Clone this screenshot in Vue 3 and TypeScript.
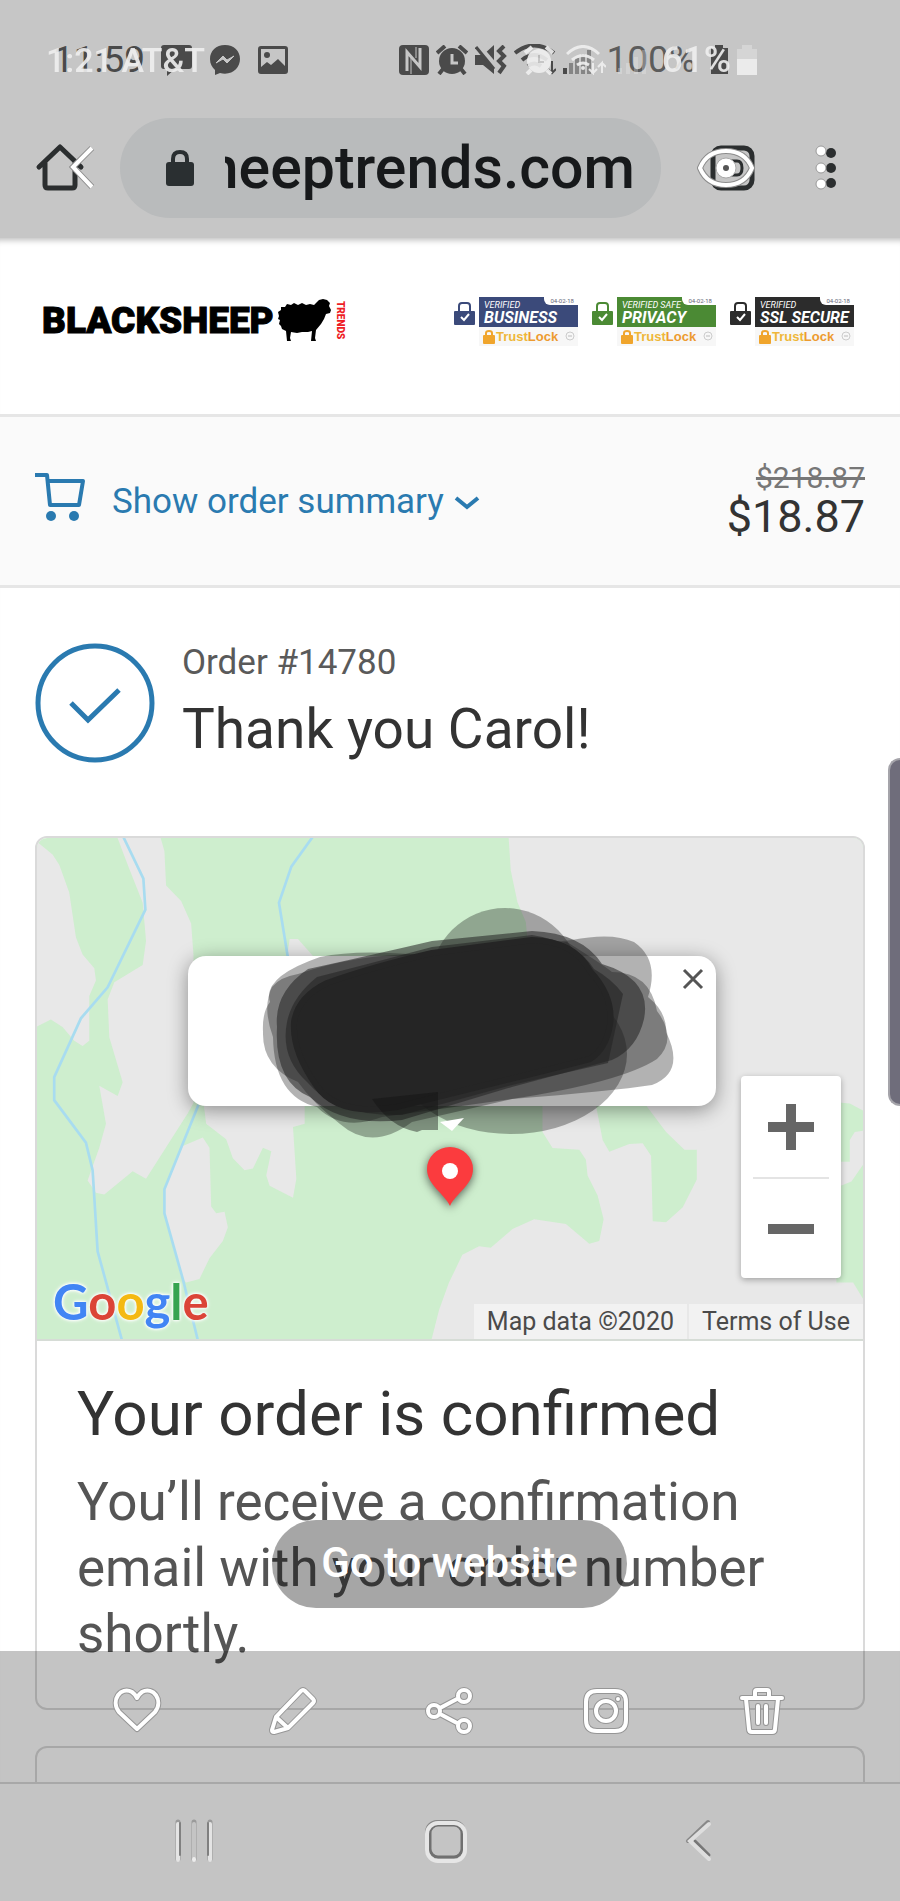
<script setup lang="ts">
interface Badge {
  kind: string
  top: string
  name: string
}

const badges: Badge[] = [
  { kind: 'business', top: 'VERIFIED', name: 'BUSINESS' },
  { kind: 'privacy', top: 'VERIFIED SAFE', name: 'PRIVACY' },
  { kind: 'ssl', top: 'VERIFIED', name: 'SSL SECURE' },
]

interface Action {
  label: string
  path: string
}

const actions: Action[] = [
  {
    label: 'Favorite',
    path: 'M25 43 L7 26 C-2 14 9 0 20 6 Q23 8 25 12 Q27 8 30 6 C41 0 52 14 43 26 Z',
  },
  {
    label: 'Edit',
    path: 'M33 5 Q35 3 37 5 L45 13 Q47 15 45 17 L20 42 L6 46 Q4 46 4 44 L8 31 Z M8 31 L20 42',
  },
  {
    label: 'Share',
    path: 'M15 22 L32 13 M15 28 L32 37 M15 25 A6 6 0 1 1 3 25 A6 6 0 1 1 15 25 M45 10 A6 6 0 1 1 33 10 A6 6 0 1 1 45 10 M45 40 A6 6 0 1 1 33 40 A6 6 0 1 1 45 40',
  },
  {
    label: 'Instagram',
    path: 'M16 5 H34 Q45 5 45 16 V34 Q45 45 34 45 H16 Q5 45 5 34 V16 Q5 5 16 5 Z M35 25 A10 10 0 1 1 15 25 A10 10 0 1 1 35 25 M37 12.9 V13.1',
  },
  {
    label: 'Delete',
    path: 'M5 12 H45 M18 11 V6 Q18 4 20 4 H30 Q32 4 32 6 V11 M9 13 L12 43 Q12 46 15 46 H35 Q38 46 38 43 L41 13 M21 20 V37 M29 20 V37',
  },
]
</script>

<template>
  <div class="screen">
    <header class="status">
      <div class="layer dark">
        <span class="clock">11:59</span>
        <svg width="31" height="32" viewBox="0 0 31 32"><path d="M3 1H28Q31 1 31 4V22Q31 25 28 25H14L6 32V25H3Q0 25 0 22V4Q0 1 3 1Z" /></svg>
        <svg width="30" height="30" viewBox="0 0 30 30">
          <path d="M15 0C6 0 0 6 0 14C0 19 2 22 5 25V30L10 28C22 31 30 23 30 14C30 6 24 0 15 0Z" />
          <path d="M6 18L13 11L17 15L24 11L17 18L13 14Z" fill="#c6c6c6" stroke="#c6c6c6" />
        </svg>
        <svg width="30" height="30" viewBox="0 0 30 30">
          <path fill-rule="evenodd" d="M3 1H27Q30 1 30 4V26Q30 29 27 29H3Q0 29 0 26V4Q0 1 3 1ZM3 4V22L9 17L13 20L20 14L27 21V4Z" />
          <circle cx="9" cy="10" r="3" />
        </svg>
        <div class="signals">
          <svg width="30" height="30" viewBox="0 0 30 30">
            <rect width="30" height="30" rx="4" />
            <path d="M8 26V7L21 22V3" fill="none" stroke="#c6c6c6" stroke-width="3" />
            <path d="M12 29V13M17 2V13" stroke="#c6c6c6" stroke-width="1" />
          </svg>
          <svg width="32" height="30" viewBox="0 0 32 30">
            <circle cx="16" cy="16" r="13" />
            <path d="M1 8L9 1M31 8L23 1M7 24L3 29M25 24L29 29" stroke="#4a4a4a" stroke-width="4" />
            <path d="M16 9V18H22" fill="none" stroke="#c6c6c6" stroke-width="3" />
          </svg>
          <svg width="32" height="30" viewBox="0 0 32 30">
            <path d="M0 10H8L19 0V29L8 20H0Z" />
            <path d="M3 1L20 21" stroke="#c6c6c6" stroke-width="6" />
            <path d="M1 2L19 24" stroke="#4a4a4a" stroke-width="3" />
            <path d="M29 1L24 6L29 11L24 16L29 21L24 28" fill="none" stroke="#4a4a4a" stroke-width="4" />
          </svg>
          <svg width="42" height="32" viewBox="0 0 42 32">
            <path d="M1 9Q20 -6 40 9M8 16Q20 6 33 16M14 22Q20 17 27 22" fill="none" stroke="#4a4a4a" stroke-width="4" />
            <path d="M38 17V28M34 25L38 29L42 25" fill="none" stroke="#4a4a4a" stroke-width="2" />
          </svg>
          <svg width="37" height="30" viewBox="0 0 37 30">
            <path d="M2 29V23" stroke="#4a4a4a" stroke-width="4" />
            <path d="M8 29V18M14 29V13M20 29V9M26 29V5" stroke="#858585" stroke-width="4" />
          </svg>
        </div>
        <span class="percent">100%</span>
        <svg width="17" height="30" viewBox="0 0 17 30"><path d="M0 3H4V0H12V3H17V29H0Z" /></svg>
      </div>
      <div class="layer light">
        <span class="clock">1:21 AT&amp;T</span>
        <span class="spring"></span>
        <svg width="30" height="30" viewBox="0 0 30 30">
          <circle cx="15" cy="16" r="12" />
          <path d="M1 8L8 2M29 8L22 2M7 25L3 29M23 25L27 29" stroke="#f0f0f0" stroke-width="4" />
          <path d="M15 10V17H20" fill="none" stroke="#c6c6c6" stroke-width="2" />
        </svg>
        <svg width="40" height="30" viewBox="0 0 40 30">
          <path d="M1 9Q17 -6 33 9M6 15Q17 6 28 15M11 20Q17 16 23 20" fill="none" stroke="#f0f0f0" stroke-width="3" />
          <circle cx="17" cy="23" r="2" />
          <path d="M27 18V28L23 24M27 28L31 24M36 28V18L32 22M36 18L40 22" fill="none" stroke="#f0f0f0" stroke-width="2" />
        </svg>
        <svg class="faint" width="34" height="30" viewBox="0 0 34 30"><path d="M2 29V23M10 29V18M18 29V12M26 29V5" stroke="#f0f0f0" stroke-width="4" /></svg>
        <span class="percent">61%</span>
        <svg width="20" height="30" viewBox="0 0 20 30">
          <path d="M0 4H5V0H15V4H20V14H0Z" opacity=".4" />
          <path d="M0 14H20V30H0Z" />
        </svg>
      </div>
    </header>

    <nav class="toolbar" aria-label="Browser">
      <button type="button" aria-label="Home">
        <svg width="60" height="50" viewBox="0 0 60 50">
          <path d="M4 24L25 4L46 24M10 20V42Q10 45 13 45H37Q40 45 40 42V20" fill="none" stroke="#2b2e2f" stroke-width="5" stroke-linecap="round" stroke-linejoin="round" />
          <path d="M57 5L38 24L57 44" fill="none" stroke="#8c8c8c" stroke-width="6" />
          <path d="M57 5L38 24L57 44" fill="none" stroke="#fff" stroke-width="4" />
        </svg>
      </button>
      <div class="address">
        <svg width="28" height="36" viewBox="0 0 28 36">
          <rect y="12" width="28" height="24" rx="3" fill="#2a2f31" />
          <path d="M7 14V9Q7 2 14 2Q21 2 21 9V14" fill="none" stroke="#2a2f31" stroke-width="4" />
        </svg>
        <span class="url"><span>heeptrends.com</span></span>
      </div>
      <button type="button" aria-label="Tabs">
        <svg width="60" height="50" viewBox="0 0 60 50">
          <rect x="16" y="5" width="39" height="40" rx="8" fill="none" stroke="#2b2e2f" stroke-width="5" />
          <path d="M32 18H40Q45 18 45 25Q45 32 40 32H32" fill="none" stroke="#2b2e2f" stroke-width="3" />
          <path d="M3 25Q10 8 29 8Q48 8 55 25Q48 42 29 42Q10 42 3 25Z" fill="none" stroke="#8c8c8c" stroke-width="6" />
          <path d="M3 25Q10 8 29 8Q48 8 55 25Q48 42 29 42Q10 42 3 25Z" fill="none" stroke="#fff" stroke-width="4" />
          <circle cx="29" cy="25" r="10" fill="#fff" stroke="#aaa" />
          <circle cx="29" cy="25" r="3" fill="#555" />
        </svg>
      </button>
      <button class="more" type="button" aria-label="More options">
        <svg width="24" height="50" viewBox="0 0 24 50">
          <g fill="#2b2e2f"><circle cx="16" cy="10" r="5" /><circle cx="16" cy="25" r="5" /><circle cx="16" cy="40" r="5" /></g>
          <g fill="#fff" stroke="#999"><circle cx="6" cy="8" r="5" /><circle cx="6" cy="25" r="5" /><circle cx="6" cy="41" r="5" /></g>
        </svg>
      </button>
    </nav>

    <main class="page">
      <div class="brand">
        <a class="logo" href="#" aria-label="Blacksheep Trends">
          <span class="word">BLACKSHEEP</span>
          <svg width="54" height="42" viewBox="0 0 54 42">
            <path d="M1 17L0 13L3 11L3 8L7 8L9 5L13 6L16 4L20 6L24 4L28 6L32 5L36 6L39 3L41 1L45 0L49 1L52 4L51 7L53 11L52 14L48 15L46 20L43 25L38 31L37 39L38 42H33L34 32L30 33L24 33L19 34L13 33L12 39L13 42H9L8 32L4 30L3 27L1 25L2 21L0 20Z" />
          </svg>
          <span class="trends">TRENDS</span>
        </a>
        <div class="badges">
          <div v-for="b in badges" :key="b.name" class="badge" :class="b.kind">
            <svg class="shield" width="21" height="23" viewBox="0 0 21 23">
              <rect y="9" width="21" height="14" rx="1" fill="currentColor" />
              <path d="M5 10V4Q5 1 8 1H13Q16 1 16 4V10" fill="none" stroke="currentColor" stroke-width="2" />
              <path d="M7 15L10 18L15 12" fill="none" stroke="#fff" stroke-width="2" />
            </svg>
            <div class="seal">
              <div class="plate">
                <span class="date">04-02-18</span>
                <span class="over">{{ b.top }}</span>
                <strong>{{ b.name }}</strong>
              </div>
              <div class="trust">
                <svg width="12" height="14" viewBox="0 0 12 14">
                  <rect y="5" width="12" height="9" rx="1" fill="#f0a52c" />
                  <path d="M3 6V3Q3 1 6 1Q9 1 9 3V6" fill="none" stroke="#f0a52c" stroke-width="2" />
                </svg>
                <span class="trust-name">Trust<b>Lock</b></span>
                <svg class="mark" width="11" height="11" viewBox="0 0 11 11"><circle cx="5" cy="5" r="4" fill="none" stroke="#ccc" /><path d="M3 5H7" stroke="#bbb" /></svg>
              </div>
            </div>
          </div>
        </div>
      </div>

      <section class="summary">
        <button type="button" class="toggle">
          <svg width="52" height="50" viewBox="0 0 52 50">
            <path d="M0 3H12L15 33H44L48 9H13" fill="none" stroke="#2a7ab0" stroke-width="4" stroke-linejoin="round" />
            <circle cx="16" cy="44" r="5" fill="#2a7ab0" /><circle cx="39" cy="44" r="5" fill="#2a7ab0" />
          </svg>
          <span>Show order summary</span>
          <svg class="caret" width="26" height="16" viewBox="0 0 26 16"><path d="M2 3L13 12L24 3" fill="none" stroke="#2a7ab0" stroke-width="4" /></svg>
        </button>
        <div class="prices">
          <del>$218.87</del>
          <span>$18.87</span>
        </div>
      </section>

      <section class="thanks">
        <svg width="120" height="120" viewBox="0 0 120 120" fill="none" stroke="#2a7ab0">
          <circle cx="60" cy="60" r="57" stroke-width="5" />
          <path d="M36 60L53 77L84 47" stroke-width="5" />
        </svg>
        <div>
          <p>Order #14780</p>
          <h1>Thank you Carol!</h1>
        </div>
      </section>

      <article class="card">
        <div class="map">
          <svg class="terrain" viewBox="0 0 826 500" preserveAspectRatio="xMidYMid slice">
            <rect width="826" height="500" fill="#ceeece" />
            <g transform="translate(-37 -18) scale(.3333 .3444)" fill="#e8e8e8">
              <path d="M110 60L160 100L180 130L210 210L230 340L250 390L285 430L290 465L270 510V640L250 655L225 640L190 600L155 578L110 600Z" />
              <path d="M350 40H480L495 90L500 190L545 235L575 300L582 390V820L565 850L440 1040L400 1018L315 1085L290 1080L265 1045L300 950L320 880L300 770L355 800L370 760L330 630L325 520L345 470L430 420L440 350L430 240L385 130Z" />
              <path d="M610 800H915V880L880 890L890 1040L880 1095L810 1060L800 1030L815 960L790 950L760 1010L735 1015L700 980L680 925L620 880Z" />
              <path d="M610 920L630 950L635 1120L650 1140L675 1135L685 1180L670 1220L630 1270L600 1330L560 1340L545 1325L495 1140V1070L550 945Z" />
              <path d="M862 400L870 345H895L945 400Z" />
              <path d="M370 45L432 170L438 260L325 485L245 575L165 745V812L260 935L280 1015L295 1250L370 1515M942 45L875 135L838 240L865 400M597 825L495 1070V1140L550 1330L597 1515" fill="none" stroke="#a8dcf0" stroke-width="8" />
            </g>
            <g transform="translate(412 -98) scale(.3333 .3954)">
              <path fill="#e8e8e8" d="M178 240H1250V1520H-54L-30 1440L0 1370L40 1300L90 1278L125 1282L190 1235L255 1210L350 1222L420 1272L450 1265L463 1210L445 1150L415 1100L410 1060L390 1035L310 1030L280 990V920L230 460L205 410L185 330Z" />
              <path fill="#ceeece" d="M435 900H570L650 990L705 1035H742V1110L700 1180L650 1218L610 1215L605 1050L580 1018L540 1020L480 1040L460 1010Z" />
              <path fill="#ceeece" d="M1160 915L1200 918L1250 940V985L1215 990L1200 1010V1065H1160ZM1160 1130L1205 1115L1250 1060V1425L1210 1370H1160Z" />
            </g>
          </svg>
          <div class="popup">
            <button type="button" aria-label="Close">
              <svg width="22" height="22" viewBox="0 0 22 22"><path d="M2 2L20 20M20 2L2 20" stroke="#555" stroke-width="3" /></svg>
            </button>
          </div>
          <svg class="pin" width="46" height="60" viewBox="0 0 46 60">
            <path d="M23 59C17 46 0 38 0 22A23 22 0 0 1 46 22C46 38 29 46 23 59Z" fill="#fb3b3e" />
            <circle cx="23" cy="24" r="8" fill="#fff" />
          </svg>
          <svg class="scribble" width="416" height="236" viewBox="0 0 416 236" stroke-linejoin="round">
            <g fill="#000" fill-opacity=".3">
              <ellipse cx="243" cy="76" rx="75" ry="75" />
              <ellipse cx="249" cy="147" rx="116" ry="80" />
              <path d="M58 50Q95 42 160 48L310 33Q350 25 372 35Q398 53 386 90Q405 105 404 125Q424 165 390 178Q350 184 250 192L150 215Q110 245 78 217Q50 195 36 175Q0 160 1 125Q0 105 8 95Q0 70 58 50Z" />
              <path d="M36 67Q95 47 160 47L305 35Q340 57 350 65Q388 65 395 104Q416 132 395 152Q360 175 250 192L120 210Q80 225 55 200Q12 190 11 130Q0 100 10 80Q18 70 36 67Z" />
            </g>
            <g fill="#222" fill-opacity=".55">
              <path d="M46 62Q110 48 170 34L270 24Q320 26 340 57Q390 72 382 112Q375 142 350 153L250 180L140 213Q80 220 48 190Q12 175 15 120Q12 85 46 62Z" />
              <path d="M55 70Q110 56 170 40L270 28Q315 35 332 62Q350 72 361 87L346 156L250 178L140 208Q75 210 45 175Q18 150 25 115Q30 90 55 70Z" />
            </g>
            <path d="M65 76Q110 60 170 46L270 33Q312 34 328 64Q352 90 348 118Q344 142 328 152Q290 162 240 174L135 200Q75 210 54 178Q30 144 32 115Q36 90 65 76Z" fill="#252525" stroke="#252525" stroke-width="6" />
            <path d="M110 192L176 185V223H160L155 225Q128 220 110 192Z" fill="#111" fill-opacity=".42" />
            <path d="M178 215L202 211L190 224Z" fill="#fff" />
          </svg>
          <div class="zoom">
            <button type="button" aria-label="Zoom in"><svg width="46" height="46" viewBox="0 0 46 46"><path d="M0 23H46M23 0V46" stroke="#666" stroke-width="10" /></svg></button>
            <button type="button" aria-label="Zoom out"><svg width="46" height="46" viewBox="0 0 46 46"><path d="M0 23H46" stroke="#666" stroke-width="10" /></svg></button>
          </div>
          <div class="google" aria-label="Google"><span class="b">G</span><span class="r">o</span><span class="y">o</span><span class="b">g</span><span class="g">l</span><span class="r">e</span></div>
          <div class="legal"><span>Map data ©2020</span><a href="#">Terms of Use</a></div>
        </div>
        <div class="message">
          <h2>Your order is confirmed</h2>
          <p>You’ll receive a confirmation email with your order number shortly.</p>
        </div>
      </article>
      <article class="card next"></article>
    </main>

    <div class="edge"></div>

    <footer class="dock">
      <button type="button" class="toast">Go to website</button>
      <div class="actions">
        <button v-for="a in actions" :key="a.label" type="button" :aria-label="a.label">
          <svg width="50" height="50" viewBox="0 0 50 50" fill="none" stroke-linecap="round" stroke-linejoin="round">
            <path :d="a.path" stroke="#969696" stroke-width="6" />
            <path :d="a.path" stroke="#fff" stroke-width="4" />
          </svg>
        </button>
      </div>
      <div class="keys">
        <button type="button" aria-label="Recents">
          <svg width="44" height="46" viewBox="0 0 44 46" stroke-linecap="round" fill="none">
            <path d="M6 3V40M22 3V40M38 3V40" stroke="#9a9a9a" stroke-width="5" />
            <path d="M6 5V41M38 5V41" stroke="#e4e4e4" stroke-width="4" />
            <path d="M22 5V38" stroke="#c4c4c4" stroke-width="4" />
            <path d="M22 40V41" stroke="#ececec" stroke-width="4" />
            <path d="M8 4V36M36 4V36" stroke="#808080" stroke-width="2" />
          </svg>
        </button>
        <button type="button" aria-label="Home screen">
          <svg width="46" height="46" viewBox="0 0 46 46" fill="none">
            <rect x="3" y="2" width="39" height="39" rx="11" stroke="#888" stroke-width="2" />
            <rect x="7" y="6" width="32" height="32" rx="8" stroke="#707070" stroke-width="3" />
            <rect x="4" y="4" width="38" height="38" rx="11" stroke="#e6e6e6" stroke-width="4" />
          </svg>
        </button>
        <button type="button" aria-label="Back">
          <svg width="28" height="46" viewBox="0 0 28 46" fill="none" stroke-linecap="round">
            <path d="M24 3L4 22" stroke="#888" stroke-width="4" />
            <path d="M11 22L25 36" stroke="#777" stroke-width="3" />
            <path d="M25 5L6 22L25 40" stroke="#dedede" stroke-width="4" />
          </svg>
        </button>
      </div>
    </footer>
  </div>
</template>

<style>
body {
  background: #fff;
}
</style>

<style scoped>
* {
  box-sizing: border-box;
}
.screen {
  position: relative;
  display: flex;
  flex-direction: column;
  min-height: 100vh;
  overflow: hidden;
  background: #fff;
  color: #333;
  font-family: Roboto, "Liberation Sans", sans-serif;
}
button {
  padding: 0;
  border: 0;
  background: none;
  color: inherit;
  font: inherit;
}
svg {
  display: block;
  flex: none;
}
p,
h1,
h2 {
  margin: 0;
  font-weight: 400;
}
.status {
  display: grid;
  height: 98px;
  padding-top: 39px;
  background: #c6c6c6;
}
.layer {
  grid-area: 1 / 1;
  display: flex;
  align-items: center;
  height: 42px;
  font-size: 37px;
  line-height: 42px;
  white-space: nowrap;
}
.dark {
  gap: 18px;
  padding: 0 172px 0 53px;
  color: #4a4a4a;
  fill: #4a4a4a;
}
.dark .clock {
  width: 90px;
}
.dark .percent {
  margin: 0 -3px 0 -11px;
  color: #5c5c5c;
}
.signals {
  display: flex;
  flex: 1;
  align-items: center;
  justify-content: flex-end;
  gap: 7px;
}
.light {
  gap: 12px;
  padding: 0 143px 0 46px;
  color: #f0f0f0;
  fill: #f0f0f0;
  font-weight: 500;
  opacity: 0.9;
}
.light .clock {
  font-size: 34px;
}
.light .percent {
  margin: 0 -6px 0 -2px;
}
.faint {
  opacity: 0.3;
}
.spring {
  flex: 1;
}
.toolbar {
  display: flex;
  align-items: center;
  height: 140px;
  padding: 0 61px 0 35px;
  background: #c6c6c6;
}
.address {
  display: flex;
  flex: 1;
  align-items: center;
  gap: 31px;
  min-width: 0;
  height: 100px;
  margin: 0 36px 0 25px;
  padding: 0 26px 0 46px;
  border-radius: 50px;
  background: #b9bbbc;
}
.url {
  display: flex;
  flex: 1;
  justify-content: flex-end;
  min-width: 0;
  overflow: hidden;
  color: #17191b;
  font-size: 59px;
  font-weight: 500;
  line-height: 72px;
}
.more {
  margin-left: 58px;
}
.page {
  display: flex;
  flex: 1;
  flex-direction: column;
  box-shadow: inset 0 8px 6px -6px #bbb;
}
.brand {
  display: flex;
  align-items: flex-start;
  justify-content: space-between;
  height: 179px;
  padding: 59px 46px 0 42px;
  border-bottom: 3px solid #e6e6e6;
}
.logo {
  display: flex;
  align-items: center;
  height: 46px;
  color: #000;
  text-decoration: none;
}
.word {
  margin-right: 4px;
  font-size: 37px;
  font-weight: 900;
  -webkit-text-stroke: 1px #000;
}
.trends {
  margin-left: 1px;
  color: #ee1c25;
  font-size: 10px;
  font-weight: 900;
  line-height: 14px;
  writing-mode: vertical-rl;
}
.badges {
  display: flex;
  gap: 14px;
}
.badge {
  display: flex;
  gap: 4px;
}
.shield {
  margin-top: 5px;
}
.business {
  color: #3b4a7a;
}
.privacy {
  color: #4b8a34;
}
.ssl {
  color: #2c2c2c;
}
.seal {
  width: 99px;
}
.plate {
  position: relative;
  display: flex;
  flex-direction: column;
  height: 30px;
  padding: 4px 0 0 5px;
  background: currentColor;
  font-style: italic;
  white-space: nowrap;
}
.over {
  color: #fff;
  font-size: 9px;
  line-height: 9px;
}
.plate strong {
  color: #fff;
  font-size: 16px;
  line-height: 15px;
}
.date {
  position: absolute;
  top: 0;
  right: 0;
  padding: 0 4px 0 6px;
  border-bottom-left-radius: 6px;
  background: #fff;
  color: #667;
  font-size: 6px;
  font-style: normal;
  line-height: 8px;
}
.trust {
  display: flex;
  align-items: center;
  gap: 1px;
  height: 19px;
  padding: 0 2px 0 4px;
  background: #f7f7f7;
  color: #efb73a;
  font-family: "Liberation Sans", sans-serif;
  font-size: 13px;
  font-weight: 700;
}
.trust b {
  color: #ed9b2f;
}
.mark {
  margin-left: auto;
}
.summary {
  display: flex;
  align-items: center;
  justify-content: space-between;
  height: 171px;
  padding: 0 35px 4px;
  border-bottom: 3px solid #e6e6e6;
  background: #fafafa;
}
.toggle {
  display: flex;
  align-items: center;
  color: #2a7ab0;
  font-size: 35px;
  line-height: 50px;
}
.toggle span {
  margin: 6px 10px 0 25px;
}
.toggle svg:first-child {
  margin-bottom: 4px;
}
.caret {
  margin-top: 8px;
}
.prices {
  display: flex;
  flex-direction: column;
  align-items: flex-end;
  font-size: 45px;
  line-height: 42px;
}
.prices del {
  color: #777;
  font-size: 30px;
  line-height: 36px;
}
.thanks {
  display: flex;
  gap: 27px;
  padding: 55px 35px 71px;
}
.thanks p {
  color: #5a5a5a;
  font-size: 35px;
  line-height: 40px;
}
.thanks h1 {
  margin-top: 10px;
  font-size: 55px;
  line-height: 72px;
}
.card {
  margin: 0 35px;
  border: 2px solid #dadada;
  border-radius: 12px;
}
.map {
  position: relative;
  height: 503px;
  overflow: hidden;
  border-bottom: 2px solid #d6dcd6;
  border-radius: 10px 10px 0 0;
}
.terrain {
  width: 100%;
  height: 100%;
}
.popup {
  position: absolute;
  top: 118px;
  left: 50%;
  width: 528px;
  height: 150px;
  margin-left: -262px;
  border-radius: 18px;
  background: #fff;
  box-shadow: 0 4px 20px rgba(0, 0, 0, 0.4);
}
.popup button {
  position: absolute;
  top: 12px;
  right: 12px;
}
.pin {
  position: absolute;
  top: 309px;
  left: 50%;
  margin-left: -23px;
  overflow: visible;
  filter: drop-shadow(0 2px 5px rgba(0, 0, 0, 0.6));
}
.scribble {
  position: absolute;
  top: 69px;
  left: 50%;
  margin-left: -188px;
}
.zoom {
  position: absolute;
  right: 22px;
  bottom: 61px;
  display: grid;
  width: 100px;
  padding: 0 12px;
  border-radius: 4px;
  background: #fff;
  box-shadow: 0 2px 6px rgba(0, 0, 0, 0.3);
}
.zoom button {
  display: grid;
  place-items: center;
  height: 101px;
}
.zoom button + button {
  border-top: 2px solid #e4e4e4;
}
.google {
  position: absolute;
  bottom: 8px;
  left: 16px;
  font-family: Lato, sans-serif;
  font-size: 49px;
  font-weight: 700;
  line-height: 60px;
  text-shadow: 0 0 3px #fff, 0 0 3px #fff, 0 0 5px #fff;
}
.b {
  color: #4285f4;
}
.r {
  color: #db4437;
}
.y {
  color: #f4b912;
}
.g {
  color: #36a350;
}
.legal {
  position: absolute;
  right: 0;
  bottom: 0;
  display: flex;
  gap: 2px;
  color: #4a4a4a;
  font-size: 25px;
  line-height: 35px;
}
.legal span,
.legal a {
  padding: 0 13px;
  background: rgba(245, 245, 245, 0.75);
  color: inherit;
  text-decoration: none;
}
.message {
  padding: 35px 40px 41px;
}
.message h2 {
  font-size: 62px;
  line-height: 76px;
}
.message p {
  margin-top: 17px;
  color: #555;
  font-size: 53px;
  line-height: 66px;
}
.next {
  flex: 1;
  margin-top: 36px;
  border-bottom: 0;
  border-radius: 12px 12px 0 0;
}
.edge {
  position: absolute;
  top: 758px;
  right: 0;
  width: 12px;
  height: 348px;
  border: 2px solid #a5a4aa;
  border-right: 0;
  border-radius: 12px 0 0 12px;
  background: #6f6d7b;
}
.dock {
  position: relative;
}
.toast {
  position: absolute;
  bottom: 293px;
  left: 50%;
  width: 355px;
  height: 88px;
  margin-left: -178px;
  padding-bottom: 4px;
  border-radius: 44px;
  background: rgba(0, 0, 0, 0.35);
  color: #fff;
  font-size: 42px;
  font-weight: 500;
}
.actions {
  position: absolute;
  right: 0;
  bottom: 119px;
  left: 0;
  display: flex;
  justify-content: space-between;
  height: 131px;
  padding: 35px 113px 0 112px;
  background: rgba(0, 0, 0, 0.23);
}
.actions button {
  height: 50px;
}
.keys {
  display: grid;
  grid-template-columns: repeat(3, 1fr);
  justify-items: center;
  height: 119px;
  padding: 35px 76px 0 68px;
  border-top: 2px solid #a8a8a8;
  background: #c4c4c4;
}
.keys button {
  height: 46px;
}
</style>
